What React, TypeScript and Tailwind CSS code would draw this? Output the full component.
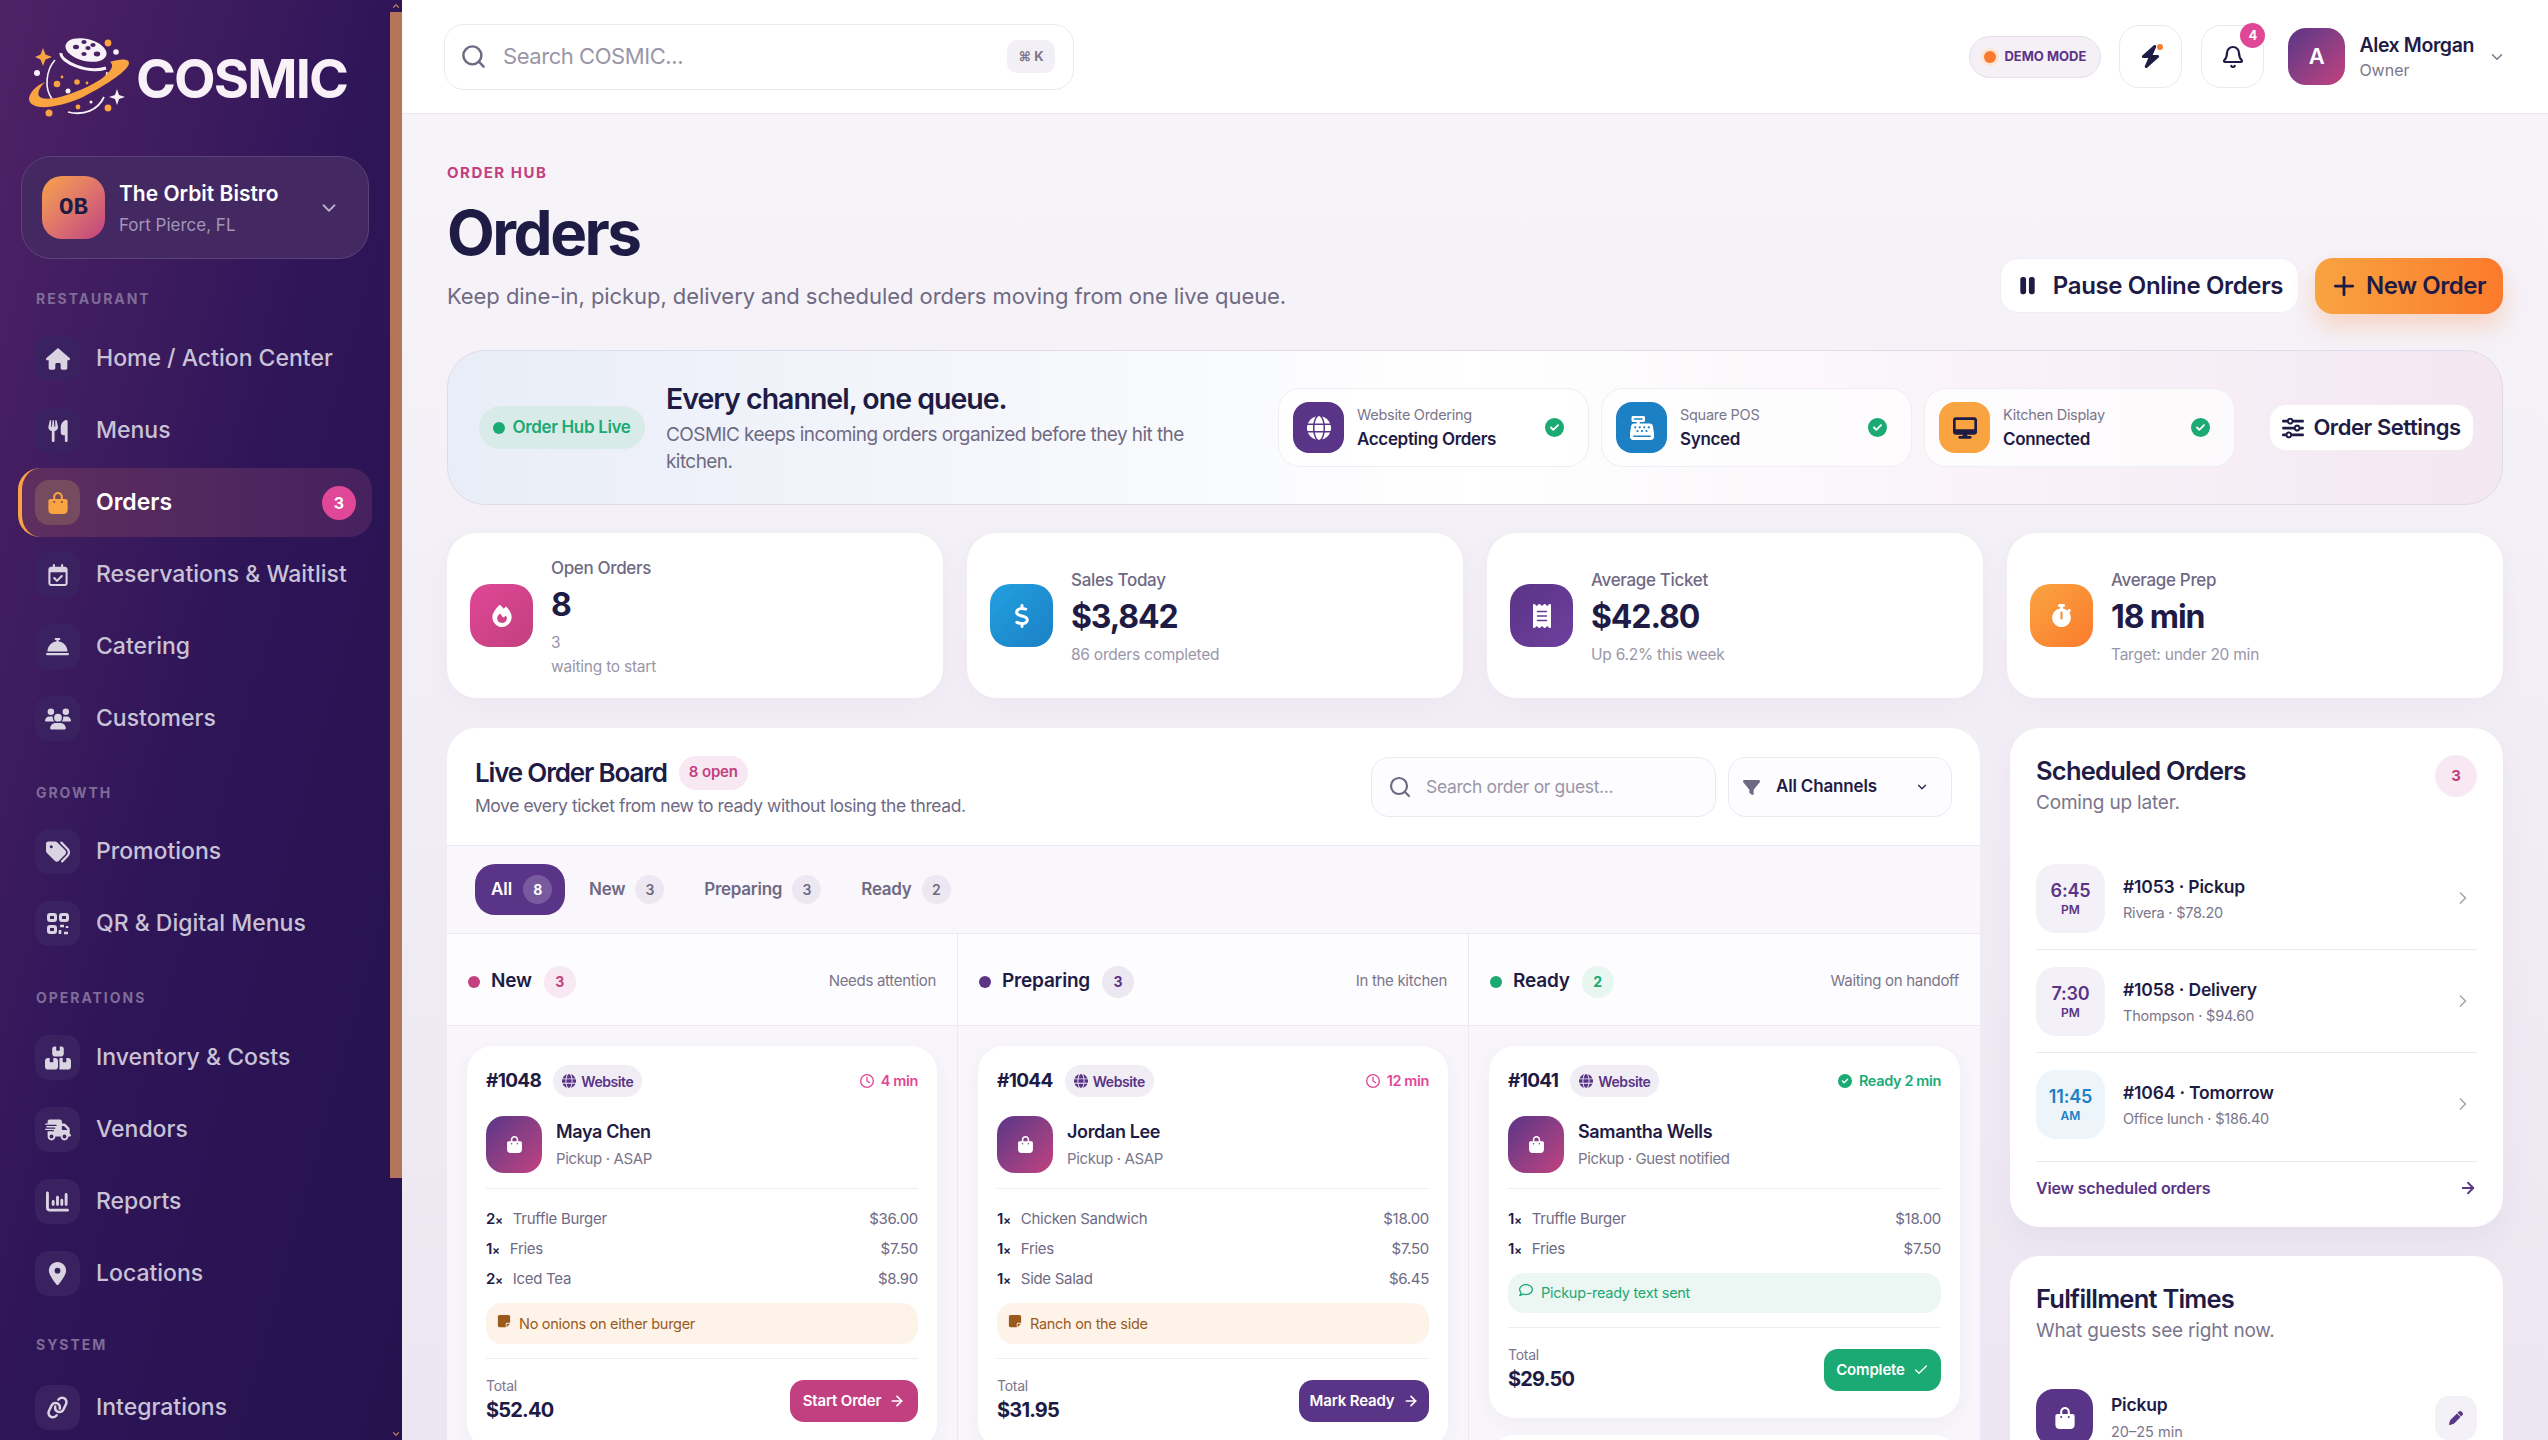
import React from "react";
import { ChevronDown, ChevronRight, ChevronUp, Search, Plus, Check, ArrowRight, Bell } from "lucide-react";
import {
  FaHouse, FaUtensils, FaBagShopping, FaRegCalendarCheck, FaBellConcierge, FaUsers, FaTags,
  FaBoxesStacked, FaTruckFast, FaChartColumn, FaLocationDot, FaLink, FaBolt, FaPause, FaGlobe,
  FaCashRegister, FaDesktop, FaSliders, FaFire, FaDollarSign, FaReceipt, FaStopwatch, FaFilter,
  FaRegClock, FaCircleCheck, FaNoteSticky, FaRegComment, FaPen,
} from "react-icons/fa6";

const FONT = "font-['Inter','Noto_Sans',sans-serif]";

function Logo() {
  return (
    <svg width="104" height="84" viewBox="0 0 104 84" className="shrink-0">
      <g transform="translate(-28,-37)">
        <path d="M55 60 C46 70 44 88 52 99" fill="none" stroke="#f8f1f8" strokeWidth="1.6" />
        <path d="M68 112 C84 116 98 110 104 97" fill="none" stroke="#f8f1f8" strokeWidth="1.8" />
        <path d="M107 72 L106 78" fill="none" stroke="#f8f1f8" strokeWidth="1.6" />
        <ellipse cx="86" cy="50" rx="21" ry="11" transform="rotate(14 86 50)" fill="#f8f1f8" />
        <path d="M61 53 C60 62 88 74 106 68" fill="none" stroke="#f8f1f8" strokeWidth="3" />
        <ellipse cx="84" cy="42" rx="2.6" ry="2" fill="#4a2264" /><ellipse cx="93" cy="45" rx="2.6" ry="2" fill="#4a2264" />
        <ellipse cx="76" cy="47" rx="3" ry="2.2" fill="#4a2264" /><ellipse cx="88" cy="48" rx="2.6" ry="2" fill="#4a2264" />
        <ellipse cx="84" cy="54" rx="2.6" ry="2" fill="#4a2264" /><ellipse cx="97" cy="54" rx="3.2" ry="2.4" fill="#4a2264" />
        <path d="M110 62 C118 59 129 58 129 63 C129 70 108 84 83 97 C68 104 50 108 40 107 C31 106 27 101 30 95 C33 89 38 85 45 82 C40 87 37 93 39 96 C42 100 52 99 60 97 C78 92 100 82 107 74 C112 69 114 65 110 62Z" fill="#f9a341" />
        <path d="M43 48 L45.5 54.5 L52 57 L45.5 59.5 L43 66 L40.5 59.5 L35 57 L40.5 54.5Z" fill="#f9a341" />
        <path d="M117 89 L119 95 L125 97 L119 99 L117 105 L115 99 L109 97 L115 95Z" fill="#f8f1f8" />
        <circle cx="108" cy="43" r="3.4" fill="#f9a341" /><circle cx="116" cy="52" r="2.8" fill="#f8f1f8" />
        <circle cx="37" cy="73" r="3" fill="#f8f1f8" /><circle cx="57" cy="84" r="3.3" fill="#f9a341" />
        <circle cx="62" cy="77" r="1.4" fill="#f9a341" /><circle cx="77" cy="82" r="2.8" fill="#f9a341" />
        <circle cx="87" cy="83" r="1.4" fill="#f9a341" /><circle cx="68" cy="91" r="2.5" fill="#f8f1f8" />
        <circle cx="49" cy="113" r="3.5" fill="#f9a341" /><circle cx="78" cy="107" r="2.4" fill="#f9a341" />
        <circle cx="108" cy="108" r="3.4" fill="#f9a341" /><circle cx="91" cy="102" r="1.5" fill="#f8f1f8" />
      </g>
    </svg>
  );
}

function QrIcon() {
  return (
    <svg width="22" height="22" viewBox="0 0 22 22" fill="none" stroke="currentColor" strokeWidth="3">
      <rect x="1.5" y="1.5" width="7" height="6" rx="1.5" />
      <rect x="13.5" y="1.5" width="7" height="6" rx="1.5" />
      <rect x="1.5" y="13.5" width="7" height="6" rx="1.5" />
      <path d="M13 13h4M13 17v4M20 13v2M17 20h4" strokeWidth="2.6" />
    </svg>
  );
}

function SectionLabel({ children, mt }: { children: React.ReactNode; mt: string }) {
  return <div className={`${mt} shrink-0 pl-[36px] h-[20px] leading-[20px] text-[14px] font-bold tracking-[0.14em] text-[#7f6c97]`}>{children}</div>;
}

function NavItem({ icon, label, active, badge }: { icon: React.ReactNode; label: string; active?: boolean; badge?: string }) {
  return (
    <div
      className={`mx-[18px] h-[69px] shrink-0 flex items-center pl-[17px] pr-[16px] rounded-[22px] ${active ? "border-l-[4px] !pl-[13px] border-[#f9a341] bg-gradient-to-r from-[#5e2e5f] to-[#46215e]" : ""}`}
    >
      <div className={`w-[45px] h-[45px] rounded-[14px] flex items-center justify-center shrink-0 ${active ? "bg-[#764a5f] text-[#f9a341]" : "bg-[#3a2260] text-[#d9d3e2]"}`}>
        {icon}
      </div>
      <div className={`ml-[16px] text-[23px] whitespace-nowrap ${active ? "font-semibold text-white" : "font-medium text-[#c9c2d6]"}`}>{label}</div>
      {badge && (
        <div className="ml-auto w-[34px] h-[34px] rounded-full bg-[#e04796] text-white text-[16px] font-bold flex items-center justify-center">{badge}</div>
      )}
    </div>
  );
}

function Sidebar() {
  return (
    <aside className="w-[402px] h-[1440px] shrink-0 flex overflow-hidden bg-gradient-to-br from-[#4f2266] via-[#2e1558] to-[#25124d]">
      <div className="w-[390px] shrink-0 flex flex-col overflow-hidden">
        <div className="h-[156px] shrink-0 pl-[28px] pt-[37px] flex items-start">
          <Logo />
          <div className="ml-[4px] mt-[9px] text-[54px] leading-[66px] font-bold text-[#f8f1f8] tracking-[-0.035em]">COSMIC</div>
        </div>
        <div className="mx-[21px] h-[103px] rounded-[30px] border border-[#5d4379] bg-[#442862] flex items-center pl-[20px] pr-[28px] shrink-0">
          <div className="w-[63px] h-[63px] rounded-[20px] bg-gradient-to-br from-[#f9a341] to-[#c2407f] flex items-center justify-center font-['Liberation_Mono',monospace] font-bold text-[24px] text-[#1e1b45]">OB</div>
          <div className="ml-[14px] flex-1 pt-[2px]">
            <div className="text-[21px] leading-[28px] font-semibold text-white">The Orbit Bistro</div>
            <div className="text-[17px] leading-[24px] mt-[5px] text-[#a395b8]">Fort Pierce, FL</div>
          </div>
          <ChevronDown size={22} className="text-[#b9aeca]" />
        </div>
        <SectionLabel mt="mt-[30px]">RESTAURANT</SectionLabel>
        <div className="flex flex-col shrink-0 gap-[3px] mt-[15px]">
          <NavItem icon={<FaHouse size={24} />} label="Home / Action Center" />
          <NavItem icon={<FaUtensils size={22} />} label="Menus" />
          <NavItem active icon={<FaBagShopping size={22} />} label="Orders" badge="3" />
          <NavItem icon={<FaRegCalendarCheck size={22} />} label="Reservations & Waitlist" />
          <NavItem icon={<FaBellConcierge size={23} />} label="Catering" />
          <NavItem icon={<FaUsers size={26} />} label="Customers" />
        </div>
        <SectionLabel mt="mt-[30px]">GROWTH</SectionLabel>
        <div className="flex flex-col shrink-0 gap-[3px] mt-[14px]">
          <NavItem icon={<FaTags size={24} />} label="Promotions" />
          <NavItem icon={<QrIcon />} label="QR & Digital Menus" />
        </div>
        <SectionLabel mt="mt-[30px]">OPERATIONS</SectionLabel>
        <div className="flex flex-col shrink-0 gap-[3px] mt-[15px]">
          <NavItem icon={<FaBoxesStacked size={26} />} label="Inventory & Costs" />
          <NavItem icon={<FaTruckFast size={26} />} label="Vendors" />
          <NavItem icon={<FaChartColumn size={23} />} label="Reports" />
          <NavItem icon={<FaLocationDot size={23} />} label="Locations" />
        </div>
        <SectionLabel mt="mt-[27px]">SYSTEM</SectionLabel>
        <div className="flex flex-col shrink-0 gap-[3px] mt-[18px]">
          <NavItem icon={<FaLink size={25} className="-rotate-[20deg]" />} label="Integrations" />
        </div>
      </div>
      <div className="w-[12px] h-[1440px] flex flex-col items-center text-[#b5755a]">
        <div className="h-[12px] flex items-center"><ChevronUp size={10} strokeWidth={3} /></div>
        <div className="w-[12px] h-[1166px] bg-[#b5755a]" />
        <div className="flex-1" />
        <div className="h-[12px] flex items-center"><ChevronDown size={10} strokeWidth={3} /></div>
      </div>
    </aside>
  );
}

function IconBtn({ children, badge }: { children: React.ReactNode; badge?: boolean }) {
  return (
    <div className="relative w-[63px] h-[63px] rounded-[20px] border border-[#ece8f1] bg-white flex items-center justify-center text-[#1e1b45]">
      {children}
      {badge && <div className="absolute -top-[3px] -right-[2px] w-[25px] h-[25px] rounded-full bg-[#e04796] text-white text-[13px] font-bold flex items-center justify-center">4</div>}
    </div>
  );
}

function TopBar() {
  return (
    <header className="h-[114px] shrink-0 bg-white border-b border-[#e9e6ef] flex items-center pl-[42px] pr-[42px]">
      <div className="w-[630px] h-[66px] rounded-[20px] border border-[#ece8f1] bg-white flex items-center pl-[15px] pr-[18px]">
        <Search size={27} className="text-[#6f6a84]" strokeWidth={2.2} />
        <div className="ml-[16px] flex-1 text-[22px] tracking-[-0.02em] text-[#9a96a8]">Search COSMIC...</div>
        <div className="w-[48px] h-[33px] rounded-[10px] bg-[#f3eff6] text-[#7b768b] text-[13px] font-bold flex items-center justify-center">⌘ K</div>
      </div>
      <div className="flex-1" />
      <div className="h-[42px] w-[132px] rounded-full border border-[#e4dfe9] bg-[#f4f0f6] flex items-center justify-center gap-[8px] text-[13px] font-bold text-[#5a3486]">
        <span className="w-[12px] h-[12px] rounded-full bg-[#fb7a2c] shadow-[0_0_0_3px_#fde5d5]" />
        DEMO MODE
      </div>
      <div className="ml-[18px] flex gap-[19px]">
        <IconBtn>
          <FaBolt size={23} />
          <span className="absolute top-[18px] right-[18px] w-[6px] h-[6px] rounded-full bg-[#fb7a2c]" />
        </IconBtn>
        <IconBtn badge><Bell size={24} strokeWidth={2.2} /></IconBtn>
      </div>
      <div className="ml-[24px] w-[57px] h-[57px] rounded-[18px] bg-gradient-to-br from-[#5a3486] to-[#c2407f] text-white text-[22px] font-semibold flex items-center justify-center">A</div>
      <div className="ml-[14px]">
        <div className="text-[19.5px] leading-[26px] font-semibold text-[#1e1b45] tracking-[-0.02em]">Alex Morgan</div>
        <div className="text-[16px] leading-[24px] text-[#7b768b]">Owner</div>
      </div>
      <ChevronDown size={18} className="ml-[14px] text-[#7b768b]" />
    </header>
  );
}

function PageHeader() {
  return (
    <div className="flex items-end justify-between">
      <div>
        <div className="text-[15px] leading-[20px] font-bold tracking-[0.1em] text-[#c2407f]">ORDER HUB</div>
        <div className="mt-[14px] text-[62px] leading-[72px] font-bold text-[#1e1b45] tracking-[-0.04em]">Orders</div>
        <div className="mt-[11px] text-[22px] leading-[32px] text-[#6f6a84] tracking-[-0.003em]">Keep dine-in, pickup, delivery and scheduled orders moving from one live queue.</div>
      </div>
      <div className="flex gap-[16px] -mb-[2px]">
        <div className="h-[55px] w-[299px] rounded-[18px] bg-white border border-[#f0edf4] flex items-center justify-center gap-[14px] text-[24px] font-semibold text-[#1e1b45] tracking-[-0.015em]">
          <FaPause size={23} /> Pause Online Orders
        </div>
        <div className="h-[56px] w-[188px] rounded-[18px] bg-gradient-to-r from-[#f9a341] to-[#fb7a2c] shadow-[0_12px_24px_rgba(251,122,44,0.25)] flex items-center pl-[14px] gap-[7px] text-[24px] font-semibold text-[#1e1b45] tracking-[-0.02em]">
          <Plus size={30} strokeWidth={2.2} /> New Order
        </div>
      </div>
    </div>
  );
}

function StatusCard({ icon, color, title, value }: { icon: React.ReactNode; color: string; title: string; value: string }) {
  return (
    <div className="w-[311px] h-[79px] rounded-[22px] border border-[#f0edf4] bg-white/70 flex items-center pl-[14px] pr-[24px]">
      <div className={`w-[51px] h-[51px] rounded-[16px] ${color} flex items-center justify-center text-white`}>{icon}</div>
      <div className="ml-[13px] flex-1">
        <div className="text-[14.5px] leading-[20px] text-[#7b768b] tracking-[-0.02em]">{title}</div>
        <div className="text-[17px] leading-[24px] mt-[2px] font-semibold text-[#1e1b45] tracking-[-0.02em]">{value}</div>
      </div>
      <FaCircleCheck size={19} className="text-[#1ba974]" />
    </div>
  );
}

function Hero() {
  return (
    <div className="mt-[38px] h-[155px] rounded-[38px] border border-[#dfdce9] bg-gradient-to-r from-[#e9edf7] via-white to-[#f3e7f2] flex items-center pl-[31px] pr-[29px]">
      <div className="w-[166px] h-[43px] rounded-full bg-[#d8ebe8] flex items-center justify-center gap-[7px] text-[17px] font-semibold text-[#1ba974] tracking-[-0.02em]">
        <span className="w-[12px] h-[12px] rounded-full bg-[#1ba974]" /> Order Hub Live
      </div>
      <div className="ml-[21px] w-[560px]">
        <div className="text-[28.5px] leading-[38px] font-semibold text-[#1e1b45] tracking-[-0.035em]">Every channel, one queue.</div>
        <div className="mt-[3px] text-[19px] leading-[27px] text-[#6f6a84] tracking-[-0.03em] w-[550px]">COSMIC keeps incoming orders organized before they hit the kitchen.</div>
      </div>
      <div className="ml-auto flex items-center gap-[12px]">
        <StatusCard icon={<FaGlobe size={24} />} color="bg-[#5a3486]" title="Website Ordering" value="Accepting Orders" />
        <StatusCard icon={<FaCashRegister size={24} />} color="bg-[#1b80c4]" title="Square POS" value="Synced" />
        <StatusCard icon={<FaDesktop size={24} className="text-[#1e1b45]" />} color="bg-[#f9a341]" title="Kitchen Display" value="Connected" />
      </div>
      <div className="ml-[35px] w-[203px] h-[45px] rounded-[16px] bg-white flex items-center justify-center gap-[9px] text-[22px] font-semibold text-[#1e1b45] tracking-[-0.02em]">
        <FaSliders size={22} /> Order Settings
      </div>
    </div>
  );
}

function Stat({ icon, color, label, value, sub }: { icon: React.ReactNode; color: string; label: string; value: string; sub: React.ReactNode }) {
  return (
    <div className="h-[165px] rounded-[30px] bg-white flex items-center pl-[23px] shadow-[0_8px_24px_rgba(90,52,134,0.04)]">
      <div className={`w-[63px] h-[63px] rounded-[20px] ${color} flex items-center justify-center text-white shrink-0`}>{icon}</div>
      <div className="ml-[18px] pt-[3px]">
        <div className="text-[17px] leading-[24px] font-medium text-[#6f6a84] tracking-[-0.02em]">{label}</div>
        <div className="text-[32px] leading-[46px] mt-[2px] font-bold text-[#1e1b45] tracking-[-0.035em]">{value}</div>
        <div className="text-[15.5px] leading-[24px] mt-[3px] text-[#9a96a8] tracking-[-0.015em]">{sub}</div>
      </div>
    </div>
  );
}

function Tab({ label, count, active }: { label: string; count: string; active?: boolean }) {
  if (active)
    return (
      <div className="w-[90px] h-[51px] rounded-[20px] bg-[#5a3486] flex items-center pl-[16px] gap-[11px] text-[17px] font-semibold text-white">
        {label}
        <span className="w-[29px] h-[29px] rounded-full bg-[#7a5a9e] text-[14px] font-bold flex items-center justify-center">{count}</span>
      </div>
    );
  return (
    <div className="flex items-center gap-[10px] text-[17px] font-semibold text-[#6f6a84] tracking-[-0.015em]">
      {label}
      <span className="w-[29px] h-[29px] rounded-full bg-[#ece8f1] text-[14px] font-semibold flex items-center justify-center">{count}</span>
    </div>
  );
}

function ColHead({ dot, label, count, countCls, note }: { dot: string; label: string; count: string; countCls: string; note: string }) {
  return (
    <div className="h-[92px] flex items-center px-[21px] pt-[4px] bg-[#fdfcfe] border-b border-[#ece8f1]">
      <span className={`w-[12px] h-[12px] rounded-full ${dot}`} />
      <span className="ml-[11px] text-[19px] font-semibold text-[#1e1b45] tracking-[-0.01em]">{label}</span>
      <span className={`ml-[12px] w-[32px] h-[32px] rounded-full text-[14px] font-bold flex items-center justify-center ${countCls}`}>{count}</span>
      <span className="ml-auto text-[15px] text-[#7b768b] tracking-[-0.02em]">{note}</span>
    </div>
  );
}

type Item = [string, string, string];

function OrderCard({ id, time, timeCls, timeIcon, name, sub, items, note, total, action }: {
  id: string; time: string; timeCls: string; timeIcon: React.ReactNode; name: string; sub: string; items: Item[];
  note: React.ReactNode; total: string; action: React.ReactNode;
}) {
  return (
    <div className="rounded-[26px] bg-white px-[19px] pt-[19px] pb-[24px] shadow-[0_6px_20px_rgba(90,52,134,0.05)]">
      <div className="flex items-center h-[32px]">
        <span className="text-[19px] font-bold text-[#1e1b45] tracking-[-0.035em]">{id}</span>
        <span className="ml-[12px] h-[32px] px-[9px] rounded-full bg-[#f0edf5] flex items-center gap-[5px] text-[14px] font-semibold text-[#5a3486] tracking-[-0.03em]">
          <FaGlobe size={14} /> Website
        </span>
        <span className={`ml-auto flex items-center gap-[7px] text-[14.5px] font-semibold tracking-[-0.025em] ${timeCls}`}>{timeIcon} {time}</span>
      </div>
      <div className="mt-[19px] flex items-center">
        <div className="w-[56px] h-[57px] rounded-[18px] bg-gradient-to-br from-[#5a3486] to-[#c2407f] flex items-center justify-center text-white shrink-0">
          <FaBagShopping size={17} />
        </div>
        <div className="ml-[14px]">
          <div className="text-[18px] leading-[26px] font-semibold text-[#1e1b45] tracking-[-0.02em]">{name}</div>
          <div className="text-[15px] leading-[24px] mt-[2px] text-[#7b768b] tracking-[-0.025em]">{sub}</div>
        </div>
      </div>
      <div className="mt-[15px] border-t border-[#eeebf2] pt-[15px] flex flex-col">
        {items.map(([q, n, p]) => (
          <div key={n} className="h-[30px] flex items-center text-[15px] text-[#6f6a84] tracking-[-0.02em]">
            <span className="font-semibold text-[#1e1b45]">{q}<span className="text-[12px]">×</span></span>
            <span className="ml-[10px]">{n}</span>
            <span className="ml-auto">{p}</span>
          </div>
        ))}
      </div>
      <div className="mt-[9px]">{note}</div>
      <div className="mt-[14px] border-t border-[#eeebf2] pt-[18px] flex items-center justify-between">
        <div>
          <div className="text-[14px] leading-[18px] text-[#7b768b] tracking-[-0.02em]">Total</div>
          <div className="text-[20px] leading-[30px] font-bold text-[#1e1b45] tracking-[-0.04em]">{total}</div>
        </div>
        {action}
      </div>
    </div>
  );
}

function Note({ text, warm }: { text: string; warm?: boolean }) {
  return warm ? (
    <div className="h-[41px] rounded-[16px] bg-[#fef3e8] flex items-center pl-[11px] text-[14.5px] text-[#9a5a1c] tracking-[-0.02em]">
      <FaNoteSticky size={14} className="mr-[8px] -mt-[6px]" /> {text}
    </div>
  ) : (
    <div className="h-[40px] rounded-[16px] bg-[#ecf6f2] flex items-center pl-[11px] text-[14.5px] text-[#1ba974] tracking-[-0.02em]">
      <FaRegComment size={14} className="mr-[8px] -mt-[6px]" /> {text}
    </div>
  );
}

function Action({ label, cls, w, check }: { label: string; cls: string; w: string; check?: boolean }) {
  return (
    <div className={`${w} h-[42px] rounded-[14px] ${cls} flex items-center justify-center gap-[8px] text-[15px] font-semibold text-white tracking-[-0.01em]`}>
      {label} {check ? <Check size={16} /> : <ArrowRight size={16} strokeWidth={2.5} />}
    </div>
  );
}

function Board() {
  const pink = <FaRegClock size={14} />;
  return (
    <div className="flex-1 min-w-0 rounded-t-[30px] bg-white overflow-hidden">
      <div className="h-[118px] flex items-center pl-[28px] pr-[28px] border-b border-[#ece8f1]">
        <div>
          <div className="flex items-center -mt-[2px] mb-[2px]">
            <span className="text-[26px] font-semibold text-[#1e1b45] tracking-[-0.045em]">Live Order Board</span>
            <span className="ml-[12px] h-[34px] px-[10px] rounded-full bg-[#f8e8f2] flex items-center text-[15px] font-semibold text-[#c2407f] tracking-[-0.01em]">8 open</span>
          </div>
          <div className="text-[17.5px] leading-[24px] text-[#6f6a84] tracking-[-0.025em]">Move every ticket from new to ready without losing the thread.</div>
        </div>
        <div className="ml-auto mt-[1px] w-[345px] h-[60px] rounded-[18px] border border-[#ece8f1] bg-[#fdfcfe] flex items-center pl-[16px]">
          <Search size={24} className="text-[#6f6a84]" strokeWidth={2.2} />
          <span className="ml-[14px] text-[17.5px] text-[#9a96a8] tracking-[-0.02em]">Search order or guest...</span>
        </div>
        <div className="ml-[12px] mt-[1px] w-[224px] h-[60px] rounded-[18px] border border-[#ece8f1] bg-[#fdfcfe] flex items-center pl-[14px] pr-[22px]">
          <FaFilter size={17} className="text-[#6f6a84]" />
          <span className="ml-[16px] text-[17px] font-semibold text-[#1e1b45] tracking-[-0.01em]">All Channels</span>
          <ChevronDown size={14} className="ml-auto text-[#1e1b45]" />
        </div>
      </div>
      <div className="h-[88px] flex items-center pl-[28px] gap-[24px] bg-[#f9f7fb] border-b border-[#ece8f1]">
        <Tab active label="All" count="8" />
        <Tab label="New" count="3" />
        <div className="ml-[16px]"><Tab label="Preparing" count="3" /></div>
        <div className="ml-[16px]"><Tab label="Ready" count="2" /></div>
      </div>
      <div className="grid grid-cols-3 bg-[#f8f6fa]">
        <div className="border-r border-[#ece8f1]">
          <ColHead dot="bg-[#c2407f]" label="New" count="3" countCls="bg-[#f8e8f2] text-[#c2407f]" note="Needs attention" />
          <div className="px-[20px] py-[20px]">
            <OrderCard id="#1048" time="4 min" timeCls="text-[#e04796]" timeIcon={pink} name="Maya Chen" sub="Pickup · ASAP"
              items={[["2", "Truffle Burger", "$36.00"], ["1", "Fries", "$7.50"], ["2", "Iced Tea", "$8.90"]]}
              note={<Note warm text="No onions on either burger" />} total="$52.40"
              action={<Action label="Start Order" cls="bg-[#c2407f]" w="w-[128px]" />} />
          </div>
        </div>
        <div className="border-r border-[#ece8f1]">
          <ColHead dot="bg-[#5a3486]" label="Preparing" count="3" countCls="bg-[#ece8f1] text-[#5a3486]" note="In the kitchen" />
          <div className="px-[20px] py-[20px]">
            <OrderCard id="#1044" time="12 min" timeCls="text-[#e04796]" timeIcon={pink} name="Jordan Lee" sub="Pickup · ASAP"
              items={[["1", "Chicken Sandwich", "$18.00"], ["1", "Fries", "$7.50"], ["1", "Side Salad", "$6.45"]]}
              note={<Note warm text="Ranch on the side" />} total="$31.95"
              action={<Action label="Mark Ready" cls="bg-[#5a3486]" w="w-[130px]" />} />
          </div>
        </div>
        <div>
          <ColHead dot="bg-[#1ba974]" label="Ready" count="2" countCls="bg-[#e8f6f0] text-[#1ba974]" note="Waiting on handoff" />
          <div className="px-[20px] py-[20px] flex flex-col gap-[17px]">
            <OrderCard id="#1041" time="Ready 2 min" timeCls="text-[#1ba974]" timeIcon={<FaCircleCheck size={14} />} name="Samantha Wells" sub="Pickup · Guest notified"
              items={[["1", "Truffle Burger", "$18.00"], ["1", "Fries", "$7.50"]]}
              note={<Note text="Pickup-ready text sent" />} total="$29.50"
              action={<Action check label="Complete" cls="bg-[#1ba974]" w="w-[117px]" />} />
            <div className="h-[40px] rounded-t-[26px] bg-white" />
          </div>
        </div>
      </div>
    </div>
  );
}

function SchedRow({ time, ap, title, sub, blue, last }: { time: string; ap: string; title: string; sub: string; blue?: boolean; last?: boolean }) {
  return (
    <div className={`flex items-center ${last ? "pb-[22px]" : "pb-[16px] mb-[17px]"} border-b border-[#ece8f1]`}>
      <div className={`w-[69px] h-[69px] rounded-[20px] flex flex-col items-center justify-center font-semibold ${blue ? "bg-[#edf5fb] text-[#1b80c4]" : "bg-[#f3f0f7] text-[#5a3486]"}`}>
        <span className="text-[18px] leading-[22px] tracking-[-0.01em]">{time}</span>
        <span className="text-[12px] leading-[16px]">{ap}</span>
      </div>
      <div className="ml-[18px] flex-1">
        <div className="text-[17.5px] leading-[24px] font-semibold text-[#1e1b45] tracking-[-0.01em]">{title}</div>
        <div className="text-[14.5px] leading-[20px] mt-[4px] text-[#7b768b] tracking-[-0.015em]">{sub}</div>
      </div>
      <ChevronRight size={20} className="mr-[4px] -mt-[2px] text-[#a7a3b3]" />
    </div>
  );
}

function RightCol() {
  return (
    <div className="w-[493px] shrink-0 flex flex-col gap-[29px]">
      <div className="h-[499px] shrink-0 rounded-[30px] bg-white px-[26px] pt-[25px] shadow-[0_14px_30px_rgba(90,52,134,0.05)]">
        <div className="flex items-start justify-between h-[111px]">
          <div>
            <div className="text-[25.5px] leading-[36px] font-semibold text-[#1e1b45] tracking-[-0.03em]">Scheduled Orders</div>
            <div className="text-[19px] leading-[26px] mt-[1px] text-[#7b768b] tracking-[-0.01em]">Coming up later.</div>
          </div>
          <div className="mt-[2px] w-[42px] h-[42px] rounded-full bg-[#f8e8f2] text-[#c2407f] text-[15px] font-bold flex items-center justify-center">3</div>
        </div>
        <SchedRow time="6:45" ap="PM" title="#1053 · Pickup" sub="Rivera · $78.20" />
        <SchedRow time="7:30" ap="PM" title="#1058 · Delivery" sub="Thompson · $94.60" />
        <SchedRow blue last time="11:45" ap="AM" title="#1064 · Tomorrow" sub="Office lunch · $186.40" />
        <div className="mt-[14px] flex items-center justify-between text-[16px] font-semibold text-[#5a3486] tracking-[-0.01em]">
          View scheduled orders <ArrowRight size={18} strokeWidth={2.4} />
        </div>
      </div>
      <div className="rounded-t-[30px] bg-white px-[26px] pt-[25px] flex-1">
        <div className="text-[25.5px] leading-[36px] font-semibold text-[#1e1b45] tracking-[-0.03em]">Fulfillment Times</div>
        <div className="text-[19px] leading-[26px] mt-[1px] text-[#7b768b] tracking-[-0.01em]">What guests see right now.</div>
        <div className="mt-[45px] flex items-center">
          <div className="w-[57px] h-[57px] rounded-[18px] bg-[#5a3486] text-white flex items-center justify-center"><FaBagShopping size={22} /></div>
          <div className="ml-[18px] flex-1">
            <div className="text-[17.5px] leading-[24px] font-semibold text-[#1e1b45] tracking-[-0.01em]">Pickup</div>
            <div className="text-[14.5px] leading-[20px] mt-[5px] text-[#7b768b]">20–25 min</div>
          </div>
          <div className="w-[42px] h-[44px] rounded-[14px] bg-[#f3f0f7] flex items-center justify-center text-[#5a3486]"><FaPen size={14} /></div>
        </div>
      </div>
    </div>
  );
}

export default function App() {
  return (
    <div className={`${FONT} w-[2548px] h-[1440px] flex overflow-hidden`}>
      <Sidebar />
      <div className="flex-1 min-w-0 flex flex-col h-[1440px] overflow-hidden">
        <TopBar />
        <main className="flex-1 min-h-0 overflow-hidden bg-gradient-to-b from-[#f7f4f9] to-[#ebe6f1] pl-[45px] pr-[45px] pt-[49px]">
          <PageHeader />
          <Hero />
          <div className="mt-[28px] grid grid-cols-4 gap-[24px]">
            <Stat icon={<FaFire size={22} />} color="bg-gradient-to-br from-[#e04796] to-[#c2407f]" label="Open Orders" value="8" sub={<>3<br />waiting to start</>} />
            <Stat icon={<FaDollarSign size={24} />} color="bg-gradient-to-br from-[#22a0e0] to-[#1b80c4]" label="Sales Today" value="$3,842" sub="86 orders completed" />
            <Stat icon={<FaReceipt size={24} />} color="bg-gradient-to-br from-[#5a3486] to-[#6e3f9e]" label="Average Ticket" value="$42.80" sub="Up 6.2% this week" />
            <Stat icon={<FaStopwatch size={23} />} color="bg-gradient-to-br from-[#f9a341] to-[#fb7a2c]" label="Average Prep" value="18 min" sub="Target: under 20 min" />
          </div>
          <div className="mt-[30px] flex gap-[30px] h-[800px]">
            <Board />
            <RightCol />
          </div>
        </main>
      </div>
    </div>
  );
}
